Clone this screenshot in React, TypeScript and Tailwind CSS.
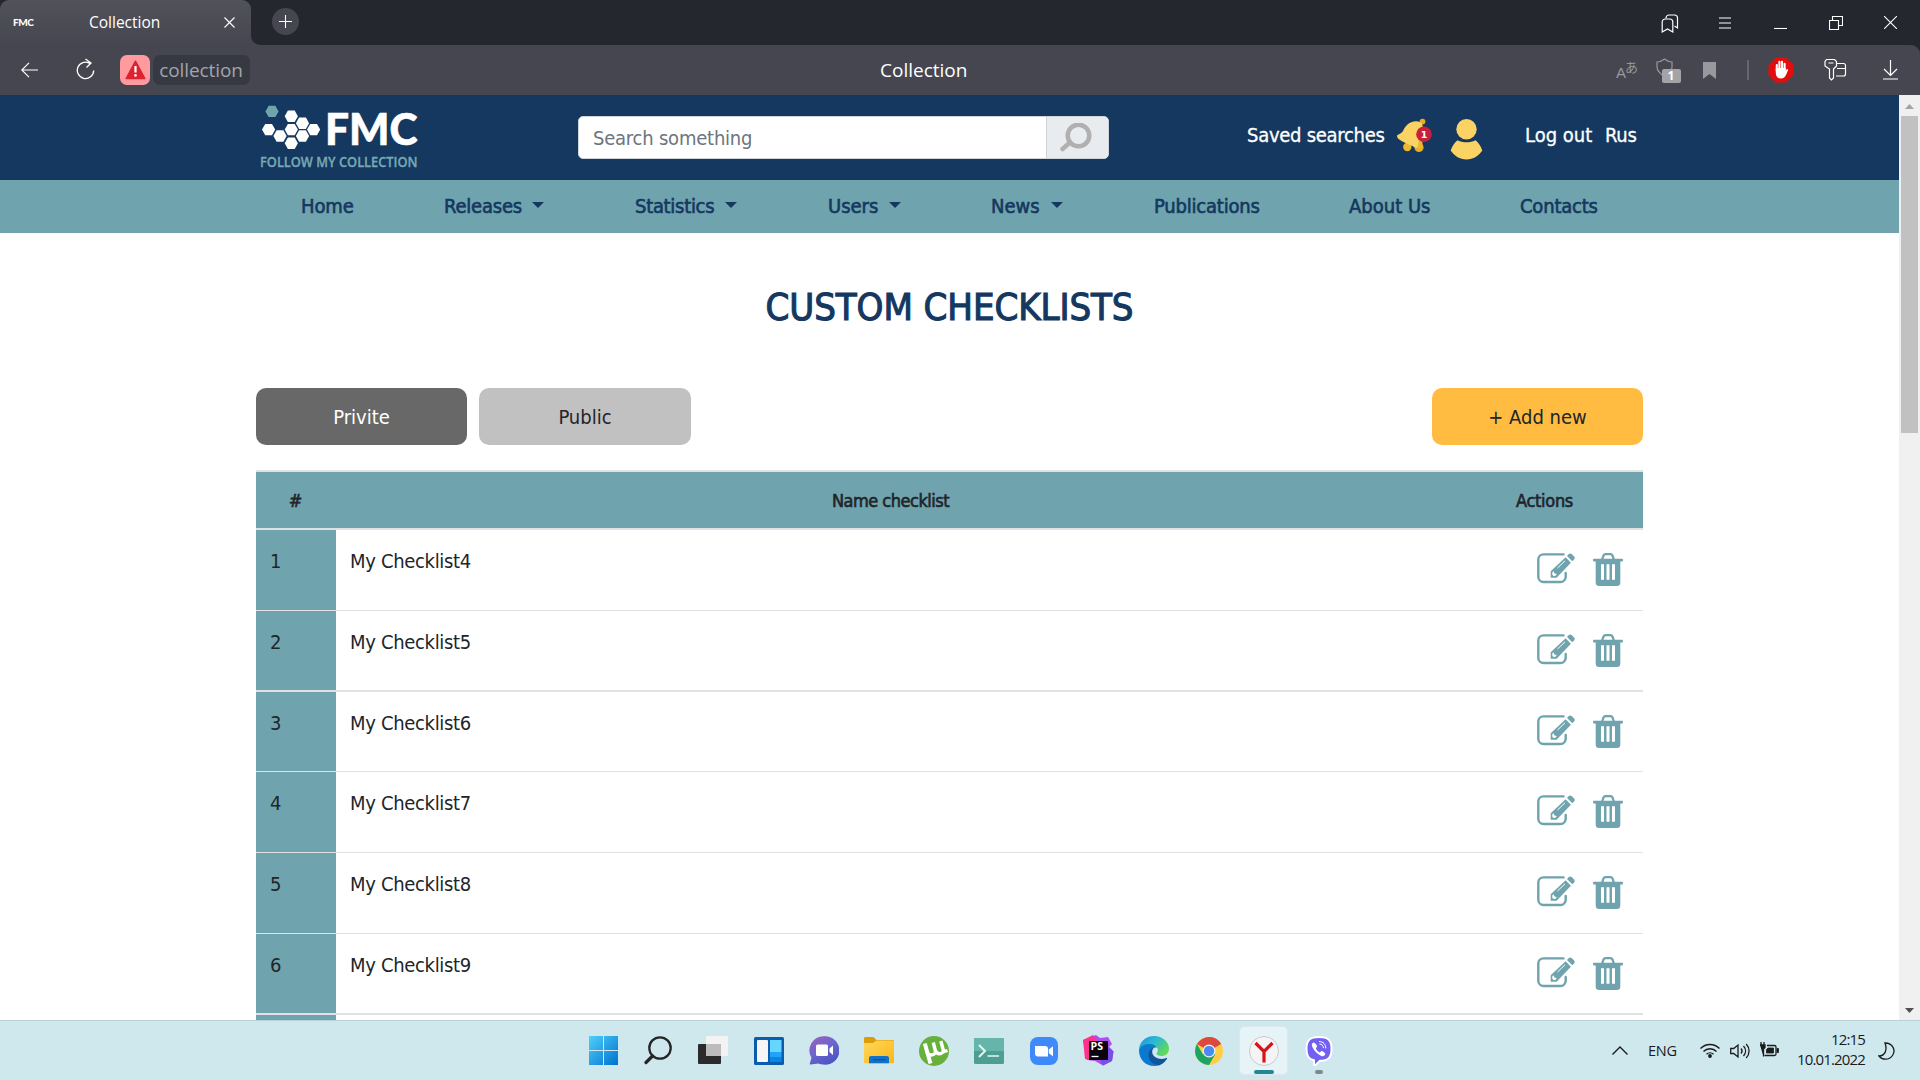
import type { ReactNode } from 'react';

const tahoma = "font-['DejaVu_Sans_Condensed','DejaVu_Sans',sans-serif]";
const segoe = "font-['Open_Sans','Noto_Sans',sans-serif]";

/* ---------- Browser chrome ---------- */

function Cell({ w = 'w-[55px]', children }: { w?: string; children: ReactNode }) {
  return <div className={`flex shrink-0 items-center justify-center ${w}`}>{children}</div>;
}

function TabBar() {
  return (
    <div className="flex h-[45px] bg-[#24272e] text-white">
      <div className="flex w-[251px] items-center rounded-t-[9px] bg-linear-to-b from-[#52525b] to-[#464650]">
        <span className="ml-[13px] w-[21px] font-['Lato',sans-serif] text-[10px] font-black tracking-[-0.5px]">FMC</span>
        <span className="ml-[55px] w-[72px] pt-[1px] text-[15.5px] whitespace-nowrap">Collection</span>
        <svg className="ml-[63px]" width="11" height="11" viewBox="0 0 11 11" stroke="#fff" strokeWidth="1.1">
          <path d="M.5.5l10 10M10.5.5l-10 10" />
        </svg>
      </div>
      <svg className="-mr-[10px]" width="10" height="45" viewBox="0 0 10 45">
        <path d="M0 35v10h10c-6 0-10-4-10-10z" fill="#464650" />
      </svg>
      <div className="mt-[8px] ml-[21px] flex size-[27px] items-center justify-center rounded-full bg-[#464650]">
        <svg width="13" height="13" viewBox="0 0 13 13" stroke="#fff" strokeWidth="1.1">
          <path d="M6.5 0v13M0 6.5h13" />
        </svg>
      </div>
      <div className="mr-[2px] ml-auto flex">
        <Cell>
          <svg className="mr-[2px] mt-[1px]" width="18" height="19" viewBox="0 0 18 19" fill="none" stroke="#fff" strokeWidth="1.2">
            <path d="M1.2 18V8a3 3 0 013-3h4.600a3 3 0 013 3v10l-5.300-3z" />
            <path d="M5 4.500V4a3 3 0 013-3h5.500a3 3 0 013 3v10l-3-2" />
          </svg>
        </Cell>
        <Cell>
          <svg className="mr-[2px]" width="12" height="12" viewBox="0 0 12 12" stroke="#fff" strokeWidth="1.1">
            <path d="M0 1h12M0 6h12M0 11h12" />
          </svg>
        </Cell>
        <Cell>
          <svg width="13" height="13" viewBox="0 0 13 13" stroke="#fff" strokeWidth="1.1">
            <path d="M0 12.500h13" />
          </svg>
        </Cell>
        <Cell>
          <svg width="14" height="14" viewBox="0 0 14 14" fill="none" stroke="#fff" strokeWidth="1.1">
            <path d="M.5 4.500h9v9h-9zM3.500 4.500v-4h10v9h-4" />
          </svg>
        </Cell>
        <Cell>
          <svg width="13" height="13" viewBox="0 0 13 13" stroke="#fff" strokeWidth="1.1">
            <path d="M0 0l13 13M13 0L0 13" />
          </svg>
        </Cell>
      </div>
    </div>
  );
}

function ToolBar() {
  return (
    <div className="bg-[#24272e]">
      <div className="flex h-[50px] items-center rounded-tr-[9px] bg-[#464650]">
        <svg className="ml-[21px]" width="17" height="16" viewBox="0 0 17 16" fill="none" stroke="#fff" strokeWidth="1.2">
          <path d="M17 8H.8M8 .8L.8 8 8 15.200" />
        </svg>
        <svg className="-mt-[2px] ml-[38px]" width="19" height="22" viewBox="0 0 19 22" fill="none" stroke="#fff" strokeWidth="1.3">
          <path d="M14.500 5.800A8.200 8.200 0 1017.700 12.500M9.500 1l5.500 4-4.500 4.500" />
        </svg>
        <div className="ml-[25px] flex size-[30px] items-center justify-center rounded-[7px] bg-[#ff9a9f]">
          <svg width="21" height="20" viewBox="0 0 21 20">
            <path d="M10.500 1.200L19.800 18.500H1.200z" fill="#df2230" stroke="#df2230" strokeWidth="1.500" strokeLinejoin="round" />
            <path d="M10.500 6v6.500" stroke="#fff" strokeWidth="2.200" />
            <circle cx="10.500" cy="15.400" r="1.300" fill="#fff" />
          </svg>
        </div>
        <div className="ml-[3px] flex h-[30px] w-[97px] items-center justify-center rounded-[7px] bg-[#373942] pt-[1px] pr-[1px] text-[19px] tracking-[-0.1px] text-[#a3a4a9]">
          collection
        </div>
        <div className="ml-[630px] pt-[1px] text-[19px] text-white">Collection</div>
        <div className="mr-[2px] ml-auto flex items-center">
          <Cell w="w-[42px]">
            <div className="flex items-start pl-[2px] text-[#98989e]">
              <span className="mt-[5px] font-['Liberation_Sans',sans-serif] text-[15px] leading-[18px]">A</span>
              <span className="-ml-[1px] font-['Noto_Sans_CJK_JP',sans-serif] text-[13px] leading-[16px]">あ</span>
            </div>
          </Cell>
          <Cell w="w-[42px]">
            <div className="relative h-[25px] w-[25px]">
              <svg width="17" height="20" viewBox="0 0 17 20" fill="none" stroke="#98989e" strokeWidth="1.2">
                <path d="M8.500 1C6 3 3.500 4 1 4v5c0 4 3.500 7 7.500 9.500C12.500 16 16 13 16 9V4C13.500 4 11 3 8.500 1z" />
              </svg>
              <span className="absolute top-[11px] left-[6px] flex h-[14px] w-[19px] items-center justify-center rounded-[2px] bg-[#a3a3a8] text-[12px] font-bold text-white">
                1
              </span>
            </div>
          </Cell>
          <Cell w="w-[41px]">
            <svg width="13" height="17" viewBox="0 0 13 17" fill="#98989e">
              <path d="M0 0h13v17l-6.500-5L0 17z" />
            </svg>
          </Cell>
          <div className="ml-[17px] h-[20px] w-[2px] bg-[#66666e]" />
          <div className="ml-[4px]" />
          <Cell>
            <svg width="26" height="26" viewBox="0 0 26 26">
              <path d="M8 .5h10L25.500 8v10L18 25.500H8L.5 18V8z" fill="#e40d0d" />
              <path
                d="M8.800 14V8M11.400 13V4.800M14 13V4.800M16.600 14V6.800"
                stroke="#fff"
                strokeWidth="2.100"
                strokeLinecap="round"
              />
              <path d="M7.800 11v5c0 3.500 2 5.600 5 5.600 2.800 0 4.300-1.600 5.300-3.900l1.900-4.500c.4-1-.9-1.600-1.600-.6l-.8 1.900V11z" fill="#fff" />
            </svg>
          </Cell>
          <Cell>
            <svg className="-mt-[2px]" width="23" height="23" viewBox="0 0 23 23" fill="none" stroke="#fff" strokeWidth="1.200">
              <path d="M2.500 1.500h8l2 2v4.500L9.500 11v9l-2 2-2-2v-9L1 8V3.500zM4.500 5h5" />
              <path d="M13 5.500h6.500a2 2 0 012 2V16a2 2 0 01-2 2H12M13 10.500h8.500" />
            </svg>
          </Cell>
          <Cell>
            <svg width="15" height="20" viewBox="0 0 15 20" fill="none" stroke="#fff" strokeWidth="1.200">
              <path d="M7.500 0v15M1 9l6.500 6.500L14 9M0 19h15" />
            </svg>
          </Cell>
        </div>
      </div>
    </div>
  );
}

/* ---------- Site header ---------- */

const whiteHexes: [number, number][] = [
  [31.3, 11.3], [42.5, 18.3], [8.6, 24.6], [31.3, 24.6], [53.6, 24.6], [20, 31], [42.5, 31], [31.3, 38.3],
];

function hex(cx: number, cy: number) {
  return `M${cx - 6.6} ${cy}l3.200 -5.700h6.800l3.200 5.700l-3.200 5.700h-6.800z`;
}

function Logo() {
  return (
    <svg className="overflow-visible" width="158" height="64" viewBox="0 0 158 64">
      <path d={hex(12, 6.4)} fill="#6fa3ad" />
      {whiteHexes.map(([x, y]) => (
        <path key={`${x}-${y}`} d={hex(x, y)} fill="#fff" />
      ))}
      <text x="65" y="39.800" fill="#fff" stroke="#fff" strokeWidth=".6" fontFamily="Lato, sans-serif" fontWeight="900" fontSize="43.500" textLength="92.500" lengthAdjust="spacingAndGlyphs">
        FMC
      </text>
      <text x="0" y="61.800" fill="#78a9b3" stroke="#78a9b3" strokeWidth=".3" fontFamily="Open Sans, sans-serif" fontWeight="600" fontSize="14.300" textLength="157.500" lengthAdjust="spacingAndGlyphs">
        FOLLOW MY COLLECTION
      </text>
    </svg>
  );
}

function Bell() {
  return (
    <svg width="36" height="36" viewBox="10 9 36 36">
      <circle cx="21.300" cy="39" r="4.200" fill="#efb62f" />
      <circle cx="33" cy="39.500" r="4.600" fill="#e9ae28" />
      <circle cx="36.500" cy="13.600" r="2.900" fill="#e9ae28" />
      <path d="M33 15l4 4c1.500 7-1 13-.6 20.500-1 2.500-4 1.500-6-1z" fill="#efb62f" />
      <path d="M11 28c0-1.500 4-1.800 6-5 2.500-5 6-9.500 13-9.700 3.500 0 5.500 1 6.500 4 1 6-3.500 11-4.500 20.500-.5 3-3 2.300-5 .5C22 36 17 34.500 12.500 31 11.500 30 11 29 11 28z" fill="#fbd264" />
      <circle cx="38" cy="26.200" r="7.800" fill="#c81f3a" />
      <text x="38" y="29.600" textAnchor="middle" fill="#fff" fontFamily="DejaVu Sans, sans-serif" fontWeight="700" fontSize="9.500">
        1
      </text>
    </svg>
  );
}

function SiteHeader() {
  return (
    <div className="h-[85px] bg-[#14385f] text-[20px] leading-[30px] text-white">
      <div className="flex">
        <div className="mt-[10px] ml-[260px]">
          <Logo />
        </div>
        <div className="mt-[21px] ml-[160px] flex h-[43px] w-[531px] overflow-hidden rounded-[5px] border border-[#ced4da] bg-white">
          <div className="flex w-[467px] items-center pl-[14px] tracking-[-0.22px] text-[#6c757d]">Search something</div>
          <div className="flex flex-1 items-center border-l border-[#ced4da] bg-[#e9ecef] pl-[12px]">
            <svg width="34" height="30" viewBox="0 0 34 30" fill="none" stroke="#b1afaf">
              <circle cx="19.500" cy="12.500" r="10.800" strokeWidth="4.500" />
              <path d="M3.500 26L11 19.500" strokeWidth="4.500" strokeLinecap="round" />
            </svg>
          </div>
        </div>
        <div className="mt-[25px] ml-[138px] w-[139px] tracking-[-0.28px] whitespace-nowrap [-webkit-text-stroke:0.3px_white]">Saved searches</div>
        <div className="mt-[22px] ml-[10px]">
          <Bell />
        </div>
        <svg className="mt-[24px] ml-[18px]" width="33" height="41" viewBox="0 0 33 41" fill="#fbd264">
          <circle cx="16.500" cy="10.300" r="10.200" />
          <path d="M7.500 21.300c5.500 2.700 12.500 2.700 18 0 3 2.500 5.500 6 6.800 10.300-3.200 5-9 9-15.800 9S3.900 36.600.7 31.600C2 27.300 4.500 23.800 7.500 21.300z" />
        </svg>
        <div className="mt-[25px] ml-[42px] w-[80px] whitespace-nowrap [-webkit-text-stroke:0.3px_white]">Log out</div>
        <div className="mt-[25px] tracking-[-0.3px] [-webkit-text-stroke:0.3px_white]">Rus</div>
      </div>
    </div>
  );
}

function NavItem({ label, caret, className }: { label: string; caret?: boolean; className: string }) {
  return (
    <div className={`flex shrink-0 items-center justify-between whitespace-nowrap ${className}`}>
      <span>{label}</span>
      {caret && (
        <svg className="-mt-[1px]" width="12" height="6" viewBox="0 0 12 6" fill="#14385f">
          <path d="M0 0h12L6 6z" />
        </svg>
      )}
    </div>
  );
}

function Nav() {
  return (
    <div className="flex h-[53px] items-center bg-[#6fa3ad] pb-[2px] text-[20px] leading-[30px] text-[#14385f] [-webkit-text-stroke:0.6px_#14385f]">
      <NavItem label="Home" className="ml-[301px] w-[143px] tracking-[-0.1px]" />
      <NavItem label="Releases" caret className="w-[100px] tracking-[-0.2px]" />
      <NavItem label="Statistics" caret className="ml-[91px] w-[102px] tracking-[-0.3px]" />
      <NavItem label="Users" caret className="ml-[91px] w-[73px]" />
      <NavItem label="News" caret className="ml-[90px] w-[72px]" />
      <NavItem label="Publications" className="ml-[91px] w-[195px] tracking-[-0.2px]" />
      <NavItem label="About Us" className="w-[171px]" />
      <NavItem label="Contacts" className="tracking-[-0.2px]" />
    </div>
  );
}

/* ---------- Checklist table ---------- */

function EditIcon() {
  return (
    <svg width="39" height="31" viewBox="0 0 39 31">
      <path d="M26.500 1.400H6.500A5.200 5.200 0 001.300 6.600v17.200a5.200 5.200 0 005.200 5.200h17a5.200 5.200 0 005.200-5.200V20" fill="none" stroke="#6fa3ad" strokeWidth="2.400" strokeLinecap="round" />
      <path d="M13.700 24.800v-6.600L28.600 4.300l5.300 5.400-14.300 15.100z" fill="#6fa3ad" />
      <path d="M30 3l1.800-1.900c.9-.9 1.900-.9 2.800 0l2.500 2.500c.9.900.9 1.900 0 2.800l-1.800 1.900z" fill="#6fa3ad" />
      <path d="M20.500 15l7.500-7.200" stroke="#fff" strokeWidth="1" />
      <path d="M15.300 19.300l1.200-1 .9 2 2.400.9-1.300 1.500-2 .3-1.200-1.200z" fill="#fff" />
    </svg>
  );
}

function TrashIcon() {
  return (
    <svg width="30" height="33" viewBox="0 0 30 33">
      <path d="M9 7l1.500-4.500C11 1.500 11.500 1.200 12.500 1.200h5c1 0 1.500.3 2 1.300L21 7" fill="none" stroke="#6fa3ad" strokeWidth="2.300" />
      <rect y="5.800" width="30" height="2.600" rx="1" fill="#6fa3ad" />
      <path d="M2.700 7h24.600v22.500a3.500 3.500 0 01-3.500 3.500H6.200a3.500 3.500 0 01-3.500-3.500z" fill="#6fa3ad" />
      <path d="M9.500 11.300v15.500M15 11.300v15.500M20.500 11.300v15.500" stroke="#fff" strokeWidth="3" />
    </svg>
  );
}

const rows = [
  { n: 1, name: 'My Checklist4', size: 'h-[81px] border-b' },
  { n: 2, name: 'My Checklist5', size: 'h-[81px] border-b-2' },
  { n: 3, name: 'My Checklist6', size: 'h-[80px] border-b' },
  { n: 4, name: 'My Checklist7', size: 'h-[81px] border-b' },
  { n: 5, name: 'My Checklist8', size: 'h-[81px] border-b' },
  { n: 6, name: 'My Checklist9', size: 'h-[81px] border-b-2' },
];

function Checklists() {
  return (
    <div className="ml-[256px] w-[1387px] text-[20px] leading-[30px] text-[#212529]">
      <h1 className="h-[155px] pt-[49px] text-center text-[38px] leading-[50px] tracking-[-0.1px] text-[#14385f] [-webkit-text-stroke:1.1px_#14385f]">
        CUSTOM CHECKLISTS
      </h1>
      <div className="flex h-[57px] text-center">
        <button className="w-[211px] rounded-[10px] bg-[#686868] text-white">Privite</button>
        <button className="ml-[12px] w-[212px] rounded-[10px] bg-[#c1c1c1]">Public</button>
        <button className="ml-auto w-[211px] rounded-[10px] bg-[#ffbc41]">+ Add new</button>
      </div>
      <div className="mt-[25px] flex h-[60px] items-center border-y-2 border-[#dee2e6] bg-[#6fa3ad] pt-[2px] text-center text-[18px] [-webkit-text-stroke:0.6px_#212529]">
        <div className="w-[79px]">#</div>
        <div className="w-[1111px] tracking-[-0.5px]">Name checklist</div>
        <div className="flex-1 tracking-[-0.3px]">Actions</div>
      </div>
      {rows.map((r) => (
        <div key={r.n} className={`flex border-[#dee2e6] ${r.size}`}>
          <div className="w-[80px] bg-[#6fa3ad] pt-[16px] pl-[14px]">{r.n}</div>
          <div className="flex-1 pt-[16px] pl-[14px] tracking-[-0.32px]">{r.name}</div>
          <div className="flex items-start gap-[17px] pt-[23px] pr-[20px]">
            <EditIcon />
            <TrashIcon />
          </div>
        </div>
      ))}
      <div className="h-[5px] w-[80px] bg-[#6fa3ad]" />
    </div>
  );
}

function ScrollBar() {
  return (
    <div className="flex h-[925px] w-[21px] flex-col items-center bg-[#f0f0f0]">
      <svg width="21" height="21" viewBox="0 0 21 21" fill="#a3a3a3">
        <path d="M6 14h9l-4.500-5z" />
      </svg>
      <div className="h-[317px] w-[17px] bg-[#c1c1c1]" />
      <svg className="mt-auto" width="21" height="21" viewBox="0 0 21 21" fill="#505050">
        <path d="M6 9h9l-4.500 5z" />
      </svg>
    </div>
  );
}

/* ---------- Taskbar ---------- */

function StartIcon() {
  return (
    <svg width="29" height="29" viewBox="0 0 29 29">
      <defs>
        <linearGradient id="win" x1="0" y1="0" x2="1" y2="1">
          <stop offset="0" stopColor="#4fd0fb" />
          <stop offset="1" stopColor="#0070d0" />
        </linearGradient>
      </defs>
      <path d="M0 0h14v14H0zM15 0h14v14H15zM0 15h14v14H0zM15 15h14v14H15z" fill="url(#win)" />
    </svg>
  );
}

function SearchIcon() {
  return (
    <svg className="mr-[2px]" width="28" height="29" viewBox="0 0 28 29" fill="none" stroke="#262626">
      <circle cx="16" cy="12" r="10.700" strokeWidth="2.300" />
      <path d="M8.500 20L2 26.500" strokeWidth="3.200" strokeLinecap="round" />
    </svg>
  );
}

function TaskViewIcon() {
  return (
    <svg width="31" height="29" viewBox="0 0 31 29">
      <rect x="0" y="8" width="23" height="20" rx="1" fill="#2b2b2b" />
      <rect x="8" y="0" width="22" height="20" rx="1" fill="#f3f3f3" />
      <path d="M8 8h15v12H8z" fill="#bcbcbc" />
    </svg>
  );
}

function WidgetsIcon() {
  return (
    <svg width="30" height="28" viewBox="0 0 30 28">
      <rect width="30" height="28" rx="1.500" fill="#0b5cad" />
      <rect x="3" y="3" width="11" height="22" rx="1" fill="#f6f6f6" />
      <rect x="16" y="3" width="11.500" height="12" fill="#66d5ff" />
      <rect x="16" y="15" width="11.500" height="5" fill="#1fa4f6" />
      <rect x="16" y="20" width="11.500" height="5" fill="#0a84ea" />
    </svg>
  );
}

function ChatIcon() {
  return (
    <svg width="30" height="29" viewBox="0 0 30 29">
      <defs>
        <linearGradient id="chat" x1="0" y1="0" x2=".6" y2="1">
          <stop offset="0" stopColor="#9a62b4" />
          <stop offset=".5" stopColor="#6f66cf" />
          <stop offset="1" stopColor="#4c55c4" />
        </linearGradient>
      </defs>
      <path d="M15 .3a14.200 14.200 0 110 28.300c-2 0-4-.6-5.700-1.200L1.500 28.500c-.8 0-1-.5-.6-1.200l1.600-5.500A14.200 14.200 0 0115 .3z" fill="url(#chat)" />
      <rect x="7" y="8.500" width="12" height="11.500" rx="1.500" fill="#fff" />
      <path d="M20.500 12.500l3.500-3v9.500l-3.500-3z" fill="#fff" />
    </svg>
  );
}

function FolderIcon() {
  return (
    <svg width="30" height="27" viewBox="0 0 30 27">
      <defs>
        <linearGradient id="folder" x1="0" y1="0" x2="1" y2="1">
          <stop offset="0" stopColor="#ffd75e" />
          <stop offset="1" stopColor="#fbb714" />
        </linearGradient>
      </defs>
      <path d="M0 1.500C0 .6.600 0 1.500 0h8l3 3H30v5H0z" fill="#dd9c0b" />
      <path d="M0 6h9l3.500-2.500H30V25a1.300 1.300 0 01-1.300 1.300H1.300A1.300 1.300 0 010 25z" fill="url(#folder)" />
      <path d="M5 26.300V21a2 2 0 012-2h16a2 2 0 012 2v5.300z" fill="#1272c8" />
      <path d="M9 22.800h12.500" stroke="#0b4a8c" strokeWidth="1" />
    </svg>
  );
}

function TorrentIcon() {
  return (
    <svg width="30" height="30" viewBox="0 0 30 30">
      <circle cx="15" cy="15" r="15" fill="#68b03c" />
      <path d="M5.800 7.500L11.500 27.500" stroke="#fff" strokeWidth="4" fill="none" />
      <path d="M8 16c1.800 4.800 9.500 3.500 8.300-1.500L14.300 6.500M16 13.500c1.500 5.500 6 5 8 2.500l4.500-1.500" stroke="#fff" strokeWidth="3.400" fill="none" />
      <path d="M21.800 5l3.200 11.500" stroke="#fff" strokeWidth="3.400" fill="none" />
    </svg>
  );
}

function TerminalIcon() {
  return (
    <svg width="30" height="26" viewBox="0 0 30 26">
      <rect width="30" height="26" rx="1.500" fill="#4d9f94" />
      <path d="M0 1.500A1.500 1.500 0 011.500 0h27A1.500 1.500 0 0130 1.500V13H0z" fill="#65b5aa" />
      <path d="M5 7l6 6-6 6" fill="none" stroke="#e8f4f2" strokeWidth="2" />
      <path d="M13.500 18H25" stroke="#bfe0dc" strokeWidth="2" />
    </svg>
  );
}

function ZoomIcon() {
  return (
    <svg width="28" height="28" viewBox="0 0 28 28">
      <rect width="28" height="28" rx="8" fill="#4089fb" />
      <path d="M5 9h10a3 3 0 013 3v7.500H8a3 3 0 01-3-3z" fill="#fff" />
      <path d="M18.800 12.500l4.200-3.200v10l-4.200-3z" fill="#fff" />
    </svg>
  );
}

function PhpStormIcon() {
  return (
    <svg width="31" height="31" viewBox="0 0 31 31">
      <path d="M0 5l13-5 4 3 8-1 4 7-3 3 4.500 4.500L29 26l-9 4.500L12 26l-8-1z" fill="#b24df0" />
      <path d="M0 5l10-5 4 6-8 19-4-1z" fill="#ff318c" />
      <path d="M20 30.500L29 26l1.500-9.500L26 12l-9 15z" fill="#7a4fe8" />
      <rect x="6" y="6" width="19" height="19" fill="#0a0410" />
      <text x="7.500" y="15" fill="#fff" fontFamily="Open Sans, sans-serif" fontWeight="700" fontSize="10" textLength="12.500" lengthAdjust="spacingAndGlyphs">
        PS
      </text>
      <path d="M8.500 21.500h7" stroke="#fff" strokeWidth="1.300" />
    </svg>
  );
}

function EdgeIcon() {
  return (
    <svg width="30" height="30" viewBox="0 0 30 30">
      <defs>
        <linearGradient id="edgeTop" x1="0" y1="0" x2="1" y2=".6">
          <stop offset="0" stopColor="#1a95dc" />
          <stop offset=".5" stopColor="#2cb9d3" />
          <stop offset="1" stopColor="#63d957" />
        </linearGradient>
      </defs>
      <path d="M0 14C0 6 7 0 15 0c8.500 0 15 6 15 12.500 0 5-3.500 7.500-7.500 7.500-3 0-5-1-5-2.200 0-.8 1.300-1.300 1.300-3.800 0-3-2.800-5-7.300-5C6 9 2 11 0 14z" fill="url(#edgeTop)" />
      <path d="M0 14c2-4.500 6-6 10.500-6 3.500 0 6.500 1.500 7.500 4-3-1.500-7.500 1.500-7.500 7 0 5 4 10 10 10-2 .8-3.500 1-5.500 1C6.500 30 0 23.500 0 14z" fill="#0c79d0" />
      <path d="M15 11.800c-3 .2-5.500 3.500-5.500 7.200 0 6 5 10.500 11 10.200 3.500-1.500 6-4 7.500-6.500.3-.6-.2-1-.8-.7-6 2.500-14-.5-14-6 0-2 1-3.500 1.800-4.200z" fill="#10549c" />
    </svg>
  );
}

function ChromeIcon() {
  return (
    <svg width="28" height="28" viewBox="0 0 28 28">
      <circle cx="14" cy="14" r="14" fill="#ffcd46" />
      <path d="M14 14L1.900 7A14 14 0 0126.100 7z" fill="#dc4a3d" />
      <path d="M14 0a14 14 0 0112.100 7H14z" fill="#dc4a3d" />
      <path d="M1.900 7A14 14 0 0014 28l6.100-10.500L14 14 8 17.500z" fill="#1da462" />
      <circle cx="14" cy="14" r="6.500" fill="#f1f1f1" />
      <circle cx="14" cy="14" r="5.200" fill="#4a8af4" />
    </svg>
  );
}

function YandexIcon() {
  return (
    <svg width="30" height="30" viewBox="0 0 30 30">
      <circle cx="15" cy="15" r="14.500" fill="#f4f4f4" stroke="#c9c9c9" />
      <path d="M6.500 7l8.500 8.500L23.500 7M15 15v11.500" fill="none" stroke="#d8121a" strokeWidth="3.200" />
    </svg>
  );
}

function ViberIcon() {
  return (
    <svg width="28" height="30" viewBox="0 0 28 30">
      <path d="M14 1c9 0 12.500 3 12.500 12S23 24.500 15 24.800l-4.500 4.200c-.8.700-1.500.4-1.500-.5v-4.200C3.500 23 1.500 20 1.500 13 1.500 4 5 1 14 1z" fill="#7360f2" stroke="#fff" strokeWidth="2" />
      <path d="M8.500 6.500c-2 1-2 2.500-1 4.800 2 4 4.500 6.700 8.800 8.700 2 .8 3.500-.3 4-2 .2-.8-2.800-3-3.600-2.900-.8.100-1.200 1.400-1.900 1.300-1.600-.5-3.600-2.600-4-4.100-.1-.7 1.200-1.100 1.300-1.900.1-.8-2.200-4.100-3.600-3.900z" fill="#fff" />
      <path d="M14.500 5.500c3.800.2 6.200 2.800 6.300 6.500M14.800 8c2.200.2 3.400 1.500 3.600 3.700" fill="none" stroke="#fff" strokeWidth="1" strokeLinecap="round" />
    </svg>
  );
}

function Taskbar() {
  return (
    <div className={`flex h-[60px] items-stretch border-t border-[#b9d3da] bg-[#cfe8ee] text-[#1b1b1b] ${segoe}`}>
      <div className="ml-[576px] flex">
        <Cell><StartIcon /></Cell>
        <Cell><SearchIcon /></Cell>
        <Cell><TaskViewIcon /></Cell>
        <Cell><WidgetsIcon /></Cell>
        <Cell><ChatIcon /></Cell>
        <Cell><FolderIcon /></Cell>
        <Cell><TorrentIcon /></Cell>
        <Cell><TerminalIcon /></Cell>
        <Cell><ZoomIcon /></Cell>
        <Cell><PhpStormIcon /></Cell>
        <Cell><EdgeIcon /></Cell>
        <Cell><ChromeIcon /></Cell>
        <Cell>
          <div className="-mt-[1px] flex h-[49px] w-[49px] flex-col items-center rounded-[5px] border border-[#dbe9ee] bg-[#e6f3f7] pt-[9px]">
            <YandexIcon />
            <div className="mt-[4px] h-[4px] w-[20px] shrink-0 rounded-full bg-[#25869a]" />
          </div>
        </Cell>
        <Cell>
          <div className="flex h-[50px] flex-col items-center pt-[10px]">
            <ViberIcon />
            <div className="mt-[4px] h-[4px] w-[8px] shrink-0 rounded-full bg-[#7c8a8e]" />
          </div>
        </Cell>
      </div>
      <div className="ml-[266px] flex items-center">
        <svg width="16" height="9" viewBox="0 0 16 9" fill="none" stroke="#1b1b1b" strokeWidth="1.400">
          <path d="M.5 8.500L8 1l7.500 7.500" />
        </svg>
        <span className="ml-[20px] w-[31px] text-[14.500px] tracking-[-0.2px]">ENG</span>
        <svg className="ml-[21px]" width="20" height="15" viewBox="0 0 20 15" fill="none" stroke="#1b1b1b" strokeWidth="1.400">
          <path d="M.5 5.500a13.200 13.200 0 0119 0M3.500 8.500a9 9 0 0113 0M6.500 11.300a5 5 0 017 0" />
          <circle cx="10" cy="13" r="1.200" fill="#1b1b1b" />
        </svg>
        <svg className="ml-[10px]" width="20" height="16" viewBox="0 0 20 16" fill="none" stroke="#1b1b1b" strokeWidth="1.300">
          <path d="M.7 5.500v5h3L8 14V2L3.700 5.500zM11 5.500c1.300 1.500 1.300 3.500 0 5M13.500 3c2.700 3 2.700 7 0 10M16.200 1c3.800 4 3.800 10 0 14" />
        </svg>
        <svg className="-mt-[2px] ml-[9px]" width="21" height="16" viewBox="0 0 21 16">
          <path d="M1 3h5v2.500L4.500 7v7.500M2 0v3M5 0v3" stroke="#1b1b1b" strokeWidth="1.300" fill="#1b1b1b" />
          <path d="M8 3.500h7.500A1.500 1.500 0 0117 5v7a1.500 1.500 0 01-1.500 1.500H5.500" fill="none" stroke="#1b1b1b" strokeWidth="1.300" />
          <path d="M7.500 7.500L9 6h5.500v5H7.500zM18 6.500h1.500v4H18z" fill="#1b1b1b" stroke="#1b1b1b" strokeWidth=".8" />
        </svg>
        <div className="-mt-[4px] ml-[15px] w-[70px] text-right text-[15px] leading-[20px] tracking-[-0.85px] whitespace-nowrap">
          <div>12:15</div>
          <div>10.01.2022</div>
        </div>
        <svg className="ml-[13px]" width="17" height="18" viewBox="0 0 17 18" fill="none" stroke="#1b1b1b" strokeWidth="1.300">
          <path d="M7 1c8 0 11 7.500 7.500 12.500C11 18.500 4 18 1 14c6 0 8.500-6 6-13z" />
        </svg>
      </div>
    </div>
  );
}

export default function App() {
  return (
    <div className="h-[1080px] w-[1920px] overflow-hidden bg-white">
      <div className={segoe}>
        <TabBar />
        <ToolBar />
      </div>
      <div className="flex h-[925px]">
        <div className={`w-[1899px] overflow-hidden ${tahoma}`}>
          <SiteHeader />
          <Nav />
          <Checklists />
        </div>
        <ScrollBar />
      </div>
      <Taskbar />
    </div>
  );
}
